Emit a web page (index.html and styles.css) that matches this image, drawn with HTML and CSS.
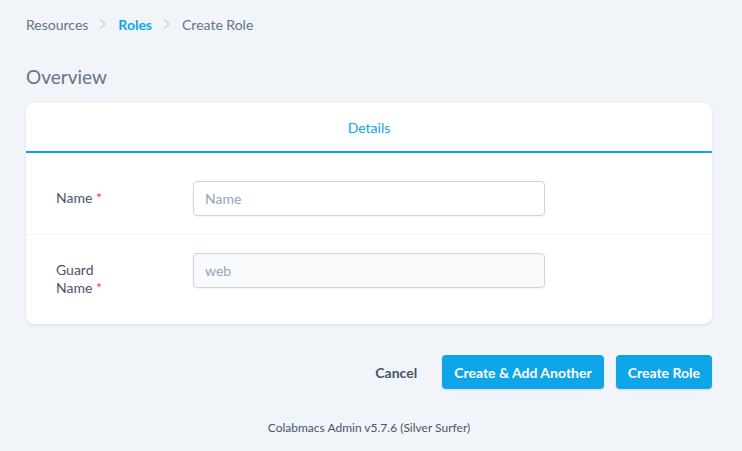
FILE: index.html
```html
<!DOCTYPE html>
<html lang="en">
<head>
    <meta charset="UTF-8">
    <meta name="viewport" content="width=device-width, initial-scale=1.0">
    <title>Create Role</title>
    <link rel="stylesheet" href="styles.css">
</head>
<body>
    <div class="page">
        <!-- Breadcrumb -->
        <nav class="breadcrumb">
            <span class="crumb">Resources</span>
            <svg class="chevron" width="6" height="10" viewBox="0 0 6 10"><path d="M1 1l4 4-4 4" fill="none" stroke="#cbd5e1" stroke-width="1.5" stroke-linecap="round" stroke-linejoin="round"/></svg>
            <span class="crumb crumb-active">Roles</span>
            <svg class="chevron" width="6" height="10" viewBox="0 0 6 10"><path d="M1 1l4 4-4 4" fill="none" stroke="#cbd5e1" stroke-width="1.5" stroke-linecap="round" stroke-linejoin="round"/></svg>
            <span class="crumb">Create Role</span>
        </nav>

        <h1 class="heading">Overview</h1>

        <form class="card">
            <div class="tabs">
                <span class="tab">Details</span>
            </div>

            <div class="panel">
                <div class="field-row">
                    <label class="field-label" for="name">Name <span class="req">*</span></label>
                    <div class="field-input">
                        <input type="text" id="name" class="input" placeholder="Name">
                    </div>
                </div>
                <div class="field-row">
                    <label class="field-label" for="guard">Guard<br>Name <span class="req">*</span></label>
                    <div class="field-input">
                        <input type="text" id="guard" class="input input-disabled" placeholder="web" disabled>
                    </div>
                </div>
            </div>
        </form>

        <div class="actions">
            <button type="button" class="btn-link">Cancel</button>
            <button type="button" class="btn-primary">Create &amp; Add Another</button>
            <button type="submit" class="btn-primary">Create Role</button>
        </div>

        <p class="footer">Colabmacs Admin v5.7.6 (Silver Surfer)</p>
    </div>
</body>
</html>
```

FILE: styles.css
```css
/* base */
body {
    margin: 0;
    background-color: #f1f5f9;
    font-family: Lato, "Noto Sans", sans-serif;
    color: #475569;
}

.page {
    padding: 14px 30px 0 26px;
}

/* breadcrumb */
.breadcrumb {
    display: flex;
    align-items: center;
    height: 20px;
    font-size: 14px;
}

.crumb {
    color: #64748b;
}

.crumb-active {
    color: #0ea5e9;
    font-weight: bold;
}

.chevron {
    margin: 0 12px;
}

.heading {
    margin: 29px 0 0;
    height: 28px;
    line-height: 28px;
    font-size: 19px;
    font-weight: normal;
    color: #64748b;
}

/* card */
.card {
    margin-top: 12px;
    background-color: #fff;
    border-radius: 8px;
    box-shadow: 0 1px 3px rgba(15, 23, 42, 0.1);
}

.tabs {
    display: flex;
    justify-content: center;
    align-items: center;
    height: 48px;
    border-bottom: 2px solid #0ea5e9;
}

.tab {
    font-size: 14px;
    color: #0ea5e9;
}

.panel {
    padding-top: 10px;
}

.field-row {
    display: flex;
    border-bottom: 1px solid #f1f5f9;
}

.field-row:last-child {
    border-bottom: none;
}

.field-label {
    width: 137px;
    padding: 26px 0 27px 30px;
    font-size: 14px;
    line-height: 18px;
    color: #475569;
}

.req {
    color: #ef4444;
}

.field-input {
    padding-top: 18px;
}

.input {
    box-sizing: border-box;
    width: 352px;
    height: 35px;
    padding: 0 11px;
    border: 1px solid #cbd5e1;
    border-radius: 4px;
    background-color: #fff;
    font-family: inherit;
    font-size: 14px;
    color: #475569;
    box-shadow: 0 1px 2px rgba(15, 23, 42, 0.05);
}

.input::placeholder {
    color: #94a3b8;
}

.input-disabled {
    background-color: #f8fafc;
}

/* buttons */
.actions {
    display: flex;
    justify-content: flex-end;
    align-items: center;
    gap: 12px;
    margin-top: 31px;
}

.btn-link {
    margin-right: 13px;
    padding: 0;
    border: none;
    background: none;
    font-family: inherit;
    font-size: 14px;
    font-weight: bold;
    color: #475569;
    cursor: pointer;
}

.btn-primary {
    height: 34px;
    padding: 0 12px;
    border: none;
    border-radius: 4px;
    background-color: #0ea5e9;
    font-family: inherit;
    font-size: 14px;
    font-weight: bold;
    color: #fff;
    cursor: pointer;
    box-shadow: 0 1px 2px rgba(15, 23, 42, 0.1);
}

.footer {
    margin: 31px 0 0;
    text-align: center;
    font-size: 12px;
    line-height: 16px;
    color: #475569;
}
```
